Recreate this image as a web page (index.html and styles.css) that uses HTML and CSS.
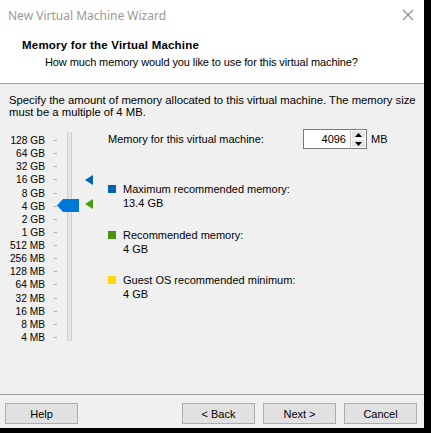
FILE: index.html
```html
<!DOCTYPE html>
<html>
<head>
<meta charset="utf-8">
<link rel="stylesheet" href="styles.css">
</head>
<body>
<div class="screen">
  <div class="window">
    <div class="titlebar">
      <span class="title">New Virtual Machine Wizard</span>
      <svg class="close" width="12" height="12" viewBox="0 0 12 12"><path d="M1 1 L11 11 M11 1 L1 11" stroke="#8a8a8a" stroke-width="1.1" fill="none"/></svg>
    </div>
    <div class="header">
      <div class="h-title">Memory for the Virtual Machine</div>
      <div class="h-sub">How much memory would you like to use for this virtual machine?</div>
    </div>
    <div class="body">
      <p class="intro">Specify the amount of memory allocated to this virtual machine. The memory size must be a multiple of 4 MB.</p>
      <div class="main">
        <div class="slider">
          <ul class="labels">
            <li>128 GB</li><li>64 GB</li><li>32 GB</li><li>16 GB</li><li>8 GB</li><li>4 GB</li><li>2 GB</li><li>1 GB</li><li>512 MB</li><li>256 MB</li><li>128 MB</li><li>64 MB</li><li>32 MB</li><li>16 MB</li><li>8 MB</li><li>4 MB</li>
          </ul>
          <div class="track"></div>
          <svg class="thumb" width="22" height="13" viewBox="0 0 22 13"><path d="M0 6.5 L6 0 H22 V13 H6 Z" fill="#0078d7"/></svg>
          <svg class="mark mark-max" width="8" height="10" viewBox="0 0 8 10"><path d="M0 5 L8 0 V10 Z" fill="#0063b1"/></svg>
          <svg class="mark mark-rec" width="8" height="10" viewBox="0 0 8 10"><path d="M0 5 L8 0 V10 Z" fill="#4a9a0a"/></svg>
        </div>
        <div class="right">
          <div class="mem-row">
            <span class="mem-label">Memory for this virtual machine:</span>
            <div class="spin">
              <div class="spin-input">4096</div>
              <div class="spin-btns">
                <div class="spin-btn"><svg width="7" height="4" viewBox="0 0 7 4"><path d="M3.5 0 L7 4 H0 Z" fill="#000"/></svg></div>
                <div class="spin-btn"><svg width="7" height="4" viewBox="0 0 7 4"><path d="M0 0 H7 L3.5 4 Z" fill="#000"/></svg></div>
              </div>
            </div>
            <span class="unit">MB</span>
          </div>
          <div class="legend legend-max">
            <div class="legend-head"><span class="sq sq-blue"></span>Maximum recommended memory:</div>
            <div class="legend-val">13.4 GB</div>
          </div>
          <div class="legend legend-rec">
            <div class="legend-head"><span class="sq sq-green"></span>Recommended memory:</div>
            <div class="legend-val">4 GB</div>
          </div>
          <div class="legend legend-min">
            <div class="legend-head"><span class="sq sq-yellow"></span>Guest OS recommended minimum:</div>
            <div class="legend-val">4 GB</div>
          </div>
        </div>
      </div>
    </div>
    <div class="footer">
      <button class="btn">Help</button>
      <div class="spacer"></div>
      <button class="btn">&lt; Back</button>
      <button class="btn">Next &gt;</button>
      <button class="btn">Cancel</button>
    </div>
  </div>
</div>
</body>
</html>
```
FILE: styles.css
```css
html, body {
  margin: 0;
  padding: 0;
  background: #000;
}
.screen {
  width: 431px;
  height: 433px;
  background: #000;
  overflow: hidden;
}
.window {
  width: 424px;
  height: 428px;
  background: #f0f0f0;
  display: flex;
  flex-direction: column;
  font-family: "Liberation Sans", Arial, sans-serif;
  font-size: 11px;
  color: #000;
}
.titlebar {
  height: 30px;
  background: #fff;
  display: flex;
  align-items: center;
  justify-content: space-between;
  padding: 0 10px 0 8px;
}
.title {
  font-family: "Noto Sans", "Open Sans", sans-serif;
  font-size: 12px;
  color: #999;
}
.close {
  display: block;
}
.header {
  background: #fff;
  border-bottom: 1px solid #a0a0a0;
  box-sizing: border-box;
  height: 54px;
  padding: 8px 0 0 22px;
}
.h-title {
  font-weight: bold;
  font-size: 11.5px;
  line-height: 14px;
  letter-spacing: 0.2px;
}
.h-sub {
  padding-left: 23px;
  margin-top: 3px;
  line-height: 14px;
  letter-spacing: -0.1px;
}
.body {
  flex: 1;
  padding: 10px 4px 0 9px;
}
.intro {
  margin: 0;
  line-height: 12px;
  font-size: 11.3px;
}
.main {
  display: flex;
  margin-top: 16px;
}
.slider {
  position: relative;
  width: 99px;
  height: 215px;
}
.labels {
  list-style: none;
  margin: 0 0 0 -5px;
  padding: 0;
  width: 41px;
  text-align: right;
  font-size: 10.2px;
  white-space: nowrap;
}
.labels li {
  height: 13.13px;
  line-height: 13px;
  position: relative;
}
.labels li::after {
  content: "";
  position: absolute;
  left: 50px;
  top: 6px;
  width: 3px;
  height: 1px;
  background: #b0b0b0;
}
.track {
  position: absolute;
  left: 58px;
  top: -2px;
  width: 3px;
  height: 209px;
  background: #e4e4e4;
  border-left: 1px solid #d0d0d0;
  border-right: 1px solid #d0d0d0;
}
.thumb {
  position: absolute;
  left: 48px;
  top: 65px;
}
.mark {
  position: absolute;
  left: 76px;
}
.mark-max { top: 41px; }
.mark-rec { top: 65px; }
.right {
  flex: 1;
}
.mem-row {
  display: flex;
  align-items: center;
  height: 20px;
  margin-top: -5px;
}
.mem-label {
  width: 195px;
}
.spin {
  display: flex;
  height: 20px;
  width: 64px;
}
.spin-input {
  width: 47px;
  box-sizing: border-box;
  border: 1px solid #7a7a7a;
  border-right: none;
  background: #fff;
  text-align: right;
  padding-right: 4px;
  line-height: 18px;
}
.spin-btns {
  width: 17px;
  box-sizing: border-box;
  border: 1px solid #7a7a7a;
  border-left: 1px solid #c8c8c8;
  background: #fff;
  display: flex;
  flex-direction: column;
}
.spin-btn {
  flex: 1;
  display: flex;
  align-items: center;
  justify-content: center;
  background: #e5e5e5;
  border: 1px solid #fff;
}
.spin-btn svg { display: block; }
.unit {
  margin-left: 4px;
}
.legend-max { margin-top: 33px; }
.legend-rec { margin-top: 17px; }
.legend-min { margin-top: 16px; }
.legend-head {
  display: flex;
  align-items: center;
  line-height: 14px;
}
.sq {
  width: 8px;
  height: 8px;
  margin-right: 7px;
  display: inline-block;
}
.sq-blue { background: #0063b1; }
.sq-green { background: #4a8f0e; }
.sq-yellow { background: #ffd700; }
.legend-val {
  padding-left: 15px;
  line-height: 15px;
}
.footer {
  height: 34px;
  border-top: 1px solid #a0a0a0;
  display: flex;
  align-items: flex-start;
  padding: 8px 7px 0 5px;
  gap: 8px;
  box-sizing: border-box;
}
.spacer { flex: 1; }
.btn {
  width: 73px;
  height: 21px;
  background: #e1e1e1;
  border: 1px solid #adadad;
  font-family: "Liberation Sans", Arial, sans-serif;
  font-size: 11px;
  color: #000;
  padding: 0;
}
```
